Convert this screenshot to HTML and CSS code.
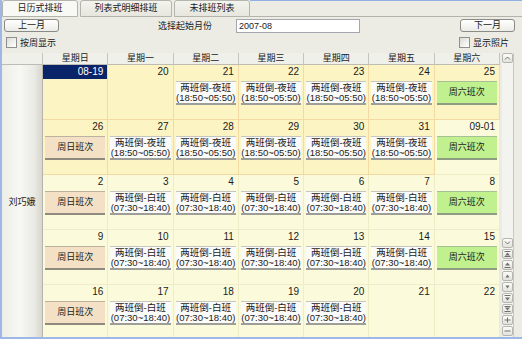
FILE: index.html
```html
<!DOCTYPE html>
<html lang="zh-CN">
<head>
    <meta charset="UTF-8">
    <title>日历式排班</title>
    <link rel="stylesheet" href="styles.css">
</head>
<body>
<div class="window">
    <div class="tabs">
        <div class="tab active">日历式排班</div>
        <div class="tab wide">列表式明细排班</div>
        <div class="tab">未排班列表</div>
        <div class="tab-fill"></div>
    </div>

    <div class="toolbar">
        <button class="nav-btn">上一月</button>
        <span class="month-label">选择起始月份</span>
        <input class="month-input" type="text" value="2007-08">
        <button class="nav-btn next">下一月</button>
    </div>

    <div class="options">
        <label class="check"><input type="checkbox">按周显示</label>
        <label class="check"><input type="checkbox">显示照片</label>
    </div>

    <div class="calendar">
        <div class="grid">
            <div class="head"></div>
            <div class="head">星期日</div>
            <div class="head">星期一</div>
            <div class="head">星期二</div>
            <div class="head">星期三</div>
            <div class="head">星期四</div>
            <div class="head">星期五</div>
            <div class="head">星期六</div>

            <div class="person">刘巧娥</div>

            <!-- week 1 -->
            <div class="day"><div class="date today">08-19</div></div>
            <div class="day"><div class="date">20</div></div>
            <div class="day"><div class="date">21</div><div class="shift work">两班倒-夜班<br>(18:50~05:50)</div></div>
            <div class="day"><div class="date">22</div><div class="shift work">两班倒-夜班<br>(18:50~05:50)</div></div>
            <div class="day"><div class="date">23</div><div class="shift work">两班倒-夜班<br>(18:50~05:50)</div></div>
            <div class="day"><div class="date">24</div><div class="shift work">两班倒-夜班<br>(18:50~05:50)</div></div>
            <div class="day"><div class="date">25</div><div class="shift sat">周六班次</div></div>

            <!-- week 2 -->
            <div class="day"><div class="date">26</div><div class="shift sun">周日班次</div></div>
            <div class="day"><div class="date">27</div><div class="shift work">两班倒-夜班<br>(18:50~05:50)</div></div>
            <div class="day"><div class="date">28</div><div class="shift work">两班倒-夜班<br>(18:50~05:50)</div></div>
            <div class="day"><div class="date">29</div><div class="shift work">两班倒-夜班<br>(18:50~05:50)</div></div>
            <div class="day"><div class="date">30</div><div class="shift work">两班倒-夜班<br>(18:50~05:50)</div></div>
            <div class="day"><div class="date">31</div><div class="shift work">两班倒-夜班<br>(18:50~05:50)</div></div>
            <div class="day next"><div class="date">09-01</div><div class="shift sat">周六班次</div></div>

            <!-- week 3 -->
            <div class="day next"><div class="date">2</div><div class="shift sun">周日班次</div></div>
            <div class="day next"><div class="date">3</div><div class="shift work">两班倒-白班<br>(07:30~18:40)</div></div>
            <div class="day next"><div class="date">4</div><div class="shift work">两班倒-白班<br>(07:30~18:40)</div></div>
            <div class="day next"><div class="date">5</div><div class="shift work">两班倒-白班<br>(07:30~18:40)</div></div>
            <div class="day next"><div class="date">6</div><div class="shift work">两班倒-白班<br>(07:30~18:40)</div></div>
            <div class="day next"><div class="date">7</div><div class="shift work">两班倒-白班<br>(07:30~18:40)</div></div>
            <div class="day next"><div class="date">8</div><div class="shift sat">周六班次</div></div>

            <!-- week 4 -->
            <div class="day next"><div class="date">9</div><div class="shift sun">周日班次</div></div>
            <div class="day next"><div class="date">10</div><div class="shift work">两班倒-白班<br>(07:30~18:40)</div></div>
            <div class="day next"><div class="date">11</div><div class="shift work">两班倒-白班<br>(07:30~18:40)</div></div>
            <div class="day next"><div class="date">12</div><div class="shift work">两班倒-白班<br>(07:30~18:40)</div></div>
            <div class="day next"><div class="date">13</div><div class="shift work">两班倒-白班<br>(07:30~18:40)</div></div>
            <div class="day next"><div class="date">14</div><div class="shift work">两班倒-白班<br>(07:30~18:40)</div></div>
            <div class="day next"><div class="date">15</div><div class="shift sat">周六班次</div></div>

            <!-- week 5 -->
            <div class="day next"><div class="date">16</div><div class="shift sun">周日班次</div></div>
            <div class="day next"><div class="date">17</div><div class="shift work">两班倒-白班<br>(07:30~18:40)</div></div>
            <div class="day next"><div class="date">18</div><div class="shift work">两班倒-白班<br>(07:30~18:40)</div></div>
            <div class="day next"><div class="date">19</div><div class="shift work">两班倒-白班<br>(07:30~18:40)</div></div>
            <div class="day next"><div class="date">20</div><div class="shift work">两班倒-白班<br>(07:30~18:40)</div></div>
            <div class="day next"><div class="date">21</div></div>
            <div class="day next"><div class="date">22</div></div>
        </div>

        <div class="scrollbar">
            <div class="sb-btn"><svg viewBox="0 0 7 6"><polyline points="1,4.5 3.5,2 6,4.5"/></svg></div>
            <div class="sb-space"></div>
            <div class="sb-btn"><svg viewBox="0 0 7 6"><polyline points="1,1.5 3.5,4 6,1.5"/></svg></div>
            <div class="sb-btn"><svg viewBox="0 0 7 6"><path d="M0.5 0.5H6.5M0.5 5.5H6.5"/><polygon class="fill" points="3.5,1.5 6,4.5 1,4.5"/></svg></div>
            <div class="sb-btn"><svg viewBox="0 0 7 6"><polygon class="fill" points="3.5,0.5 6,3.5 1,3.5"/><path d="M0.5 5.5H6.5"/></svg></div>
            <div class="sb-btn"><svg viewBox="0 0 7 6"><polygon class="fill" points="3.5,1.5 5.5,4.5 1.5,4.5"/></svg></div>
            <div class="sb-btn"><svg viewBox="0 0 7 6"><polygon class="fill" points="1.5,1.5 5.5,1.5 3.5,4.5"/></svg></div>
            <div class="sb-btn"><svg viewBox="0 0 7 6"><path d="M0.5 0.5H6.5"/><polygon class="fill" points="1,2.5 6,2.5 3.5,5.5"/></svg></div>
            <div class="sb-btn"><svg viewBox="0 0 7 6"><path d="M0.5 0.5H6.5M0.5 5.5H6.5"/><polygon class="fill" points="1,1.5 6,1.5 3.5,4.5"/></svg></div>
            <div class="sb-btn"><svg viewBox="0 0 7 6"><path d="M3.5 0.5V5.5M0.5 3H6.5"/></svg></div>
            <div class="sb-btn"><svg viewBox="0 0 7 6"><path d="M0.5 3H6.5"/></svg></div>
        </div>
    </div>
</div>
</body>
</html>
```

FILE: styles.css
```css
body {
    margin: 0;
    background-color: #ecece5;
    font-family: "Liberation Sans", "Noto Sans CJK SC", sans-serif;
    font-size: 9px;
    color: #1a1a1a;
}

.window {
    height: 339px;
    box-sizing: border-box;
    border-left: 2px solid #9db7e6;
    border-bottom: 2px solid #9db7e6;
    overflow: hidden;
}

/* tabs */
.tabs {
    display: flex;
    height: 17px;
}

.tab {
    width: 76px;
    height: 17px;
    box-sizing: border-box;
    margin-right: 2px;
    border: 1px solid #b4b4ac;
    border-radius: 3px 3px 0 0;
    background: linear-gradient(#f4f4ef, #e6e6de);
    text-align: center;
    line-height: 15px;
}

.tab.wide {
    width: 92px;
}

.tab.active {
    background: #f8f8f4;
}

.tab-fill {
    flex: 1;
    margin-left: -2px;
    border-top: 1px solid #8fb0e2;
    border-bottom: 1px solid #b4b4ac;
}

/* toolbar */
.toolbar {
    display: flex;
    align-items: center;
    height: 17px;
    padding: 0 7px 0 2px;
}

.nav-btn {
    width: 55px;
    height: 13px;
    padding: 0;
    border: 1px solid #8a8a86;
    border-radius: 3px;
    background: linear-gradient(#ffffff, #ebebe7);
    font: inherit;
    line-height: 11px;
    color: #1a1a1a;
}

.nav-btn.next {
    margin-left: auto;
}

.month-label {
    width: 78px;
    margin-left: 99px;
}

.month-input {
    width: 124px;
    height: 14px;
    box-sizing: border-box;
    margin: 0;
    padding: 0 2px;
    border: 1px solid #a4a8ae;
    background: #fff;
    font: inherit;
    color: #1a1a1a;
}

/* options */
.options {
    display: flex;
    justify-content: space-between;
    align-items: center;
    height: 16px;
    padding: 0 13px 0 4px;
}

.check {
    display: flex;
    align-items: center;
    gap: 3px;
}

.check input {
    appearance: none;
    width: 11px;
    height: 11px;
    margin: 0;
    border: 1px solid #8e8f8f;
    background: linear-gradient(135deg, #dcdcd5, #ffffff);
}

/* calendar */
.calendar {
    display: flex;
    height: 284px;
    margin-top: 3px;
}

.grid {
    width: 498px;
    display: grid;
    grid-template-columns: 41px repeat(7, 1fr);
    grid-template-rows: 12px repeat(5, 55px);
    overflow: hidden;
}

.head {
    box-sizing: border-box;
    background: #f0f0ea;
    border-right: 1px solid #c6c6be;
    border-bottom: 1px solid #bcbcb4;
    text-align: center;
    line-height: 11px;
}

.person {
    grid-row: 2 / span 5;
    display: flex;
    align-items: center;
    justify-content: center;
    padding-bottom: 3px;
    box-sizing: border-box;
    background: linear-gradient(to right, #eeeee9 0%, #f7f7f3 45%, #ebebe5 80%, #d6d6ce 100%);
    border-right: 1px solid #b4b4ac;
}

.day {
    box-sizing: border-box;
    background: #fdf4c4;
    border-right: 1px solid #f3d9a4;
    border-bottom: 1px solid #f3d9a4;
}

.day.next {
    background: #fbfbdc;
    border-color: #efecc8;
}

.date {
    height: 14px;
    padding-right: 4px;
    font-size: 10px;
    line-height: 14px;
    text-align: right;
}

.date.today {
    background: #0a246a;
    color: #fff;
}

.shift {
    height: 24px;
    box-sizing: border-box;
    margin: 2px 2px 0;
    padding-top: 1px;
    background: #fbfbfa;
    border-top: 1px solid #c6c6c0;
    border-bottom: 2px solid #9e9e98;
    font-size: 9.5px;
    line-height: 10px;
    text-align: center;
}

.shift.sun {
    background: #f4e1c5;
    border-top-color: #bdb2a0;
    border-bottom-color: #8f8a7e;
    line-height: 19px;
    font-size: 9px;
}

.shift.sat {
    background: #c1f08f;
    border-top-color: #a6c095;
    border-bottom-color: #8d9c82;
    line-height: 19px;
    font-size: 9px;
}

/* scroll buttons */
.scrollbar {
    width: 11px;
    margin-left: 2px;
    display: flex;
    flex-direction: column;
    background: #f3f3ef;
    border-right: 1px solid #c8c8c0;
}

.sb-space {
    flex: 1;
}

.sb-btn {
    height: 10px;
    margin-bottom: 1px;
    box-sizing: border-box;
    display: flex;
    align-items: center;
    justify-content: center;
    border: 1px solid #b6b6ae;
    border-radius: 2px;
    background: linear-gradient(#fbfbf9, #e3e3dd);
}

.sb-btn svg {
    width: 7px;
    height: 6px;
    fill: none;
    stroke: #707070;
    stroke-width: 1;
}

.sb-btn .fill {
    fill: #707070;
    stroke: none;
}
```
